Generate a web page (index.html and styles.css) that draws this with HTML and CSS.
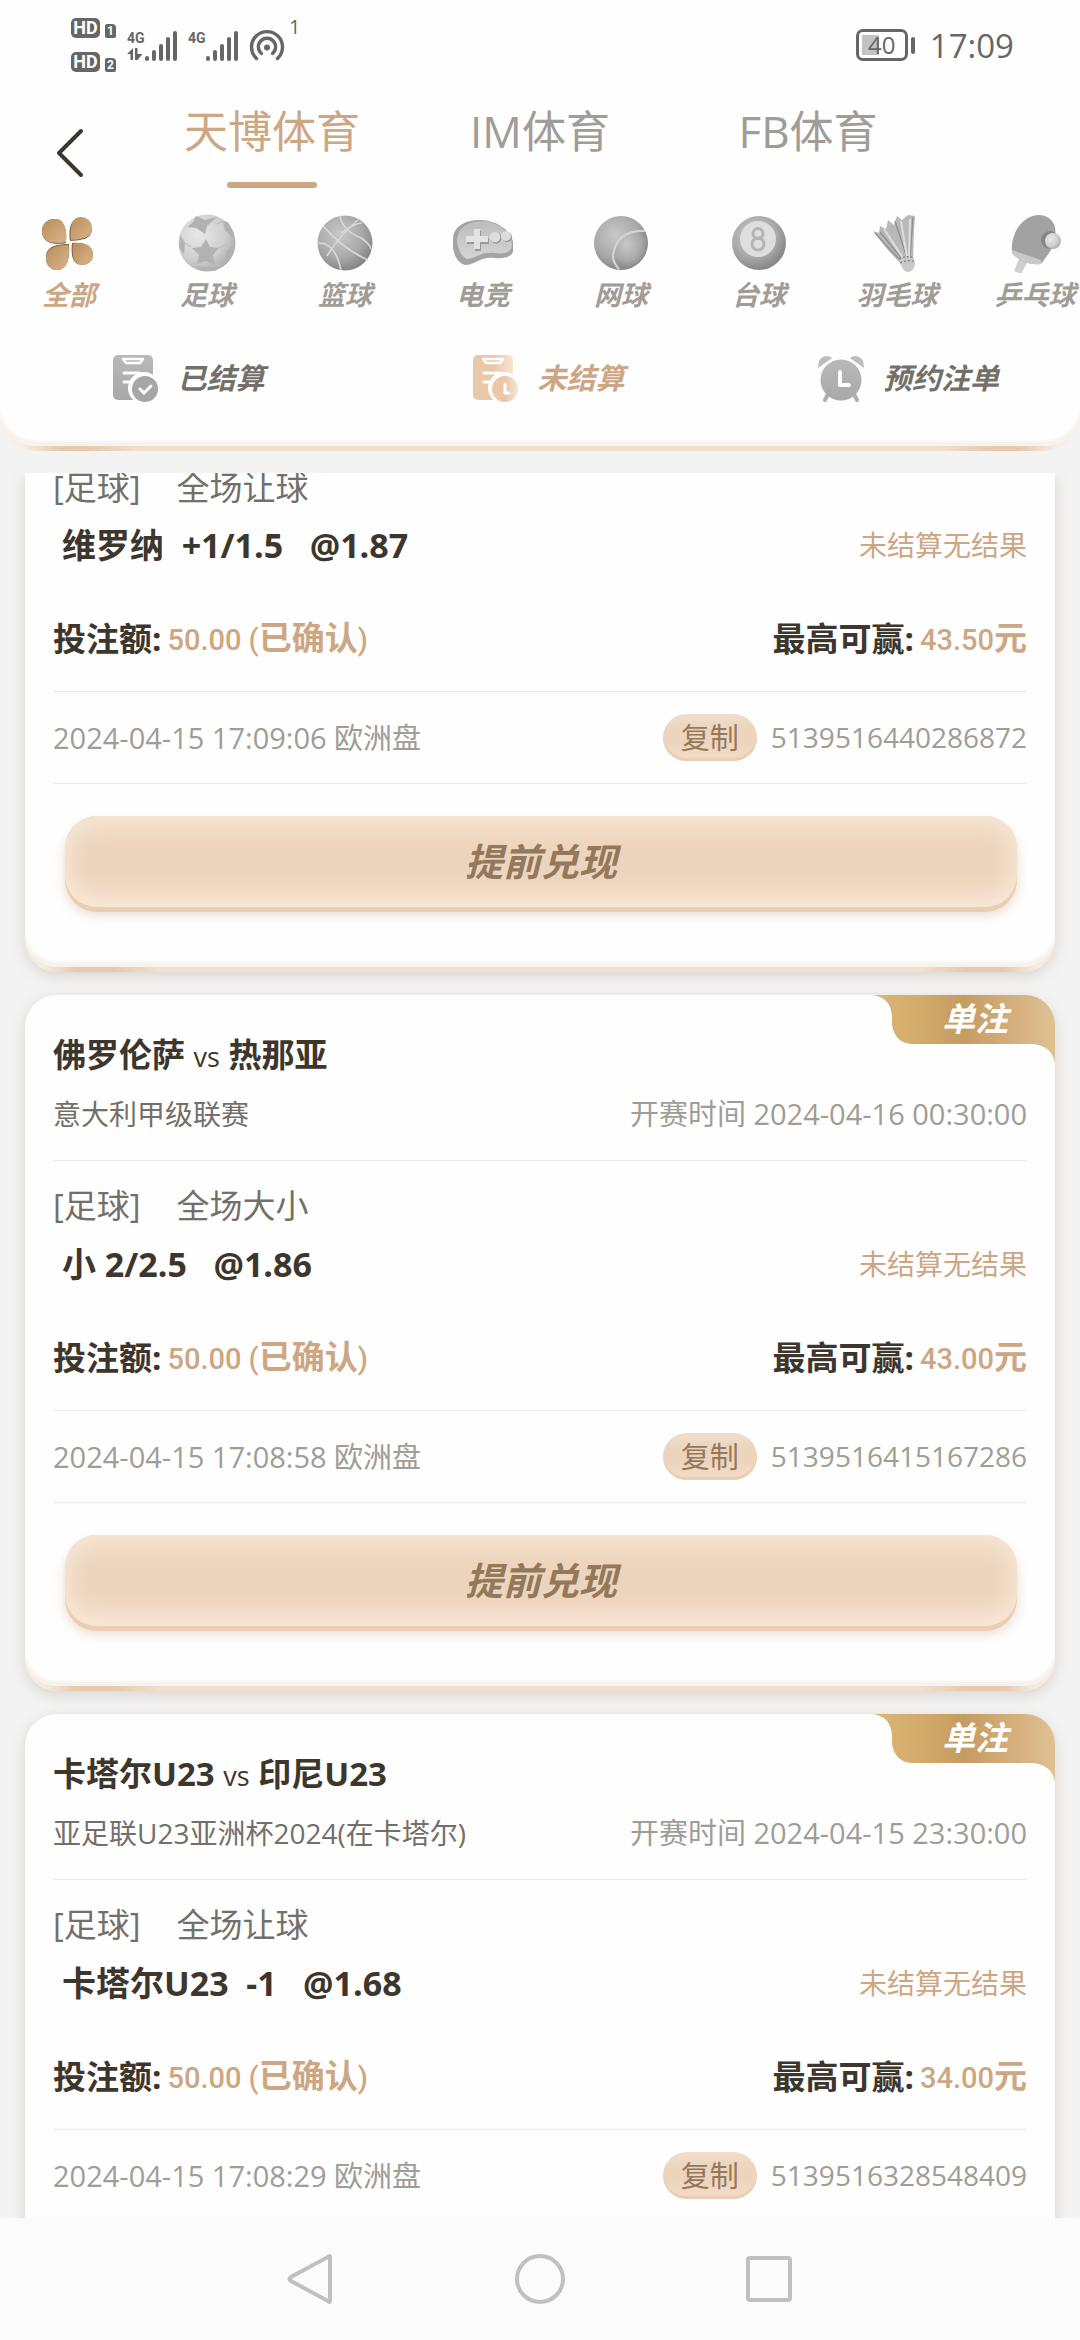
FILE: index.html
```html
<!DOCTYPE html>
<html lang="zh-CN">
  <head>
    <meta charset="UTF-8" />
    <meta name="viewport" content="width=device-width, initial-scale=1.0" />
    <title>投注记录</title>
    <link rel="stylesheet" href="styles.css">
  </head>
  <body>
    <!-- shared gradients -->
    <svg class="defs" aria-hidden="true">
      <defs>
        <linearGradient id="gold" x1="0" y1="0" x2="1" y2="1">
          <stop offset="0" stop-color="#b98d5a" />
          <stop offset="1" stop-color="#d9b58c" />
        </linearGradient>
        <radialGradient id="ball" cx="0.4" cy="0.35" r="0.7">
          <stop offset="0" stop-color="#c8c8c8" />
          <stop offset="0.6" stop-color="#a9a9a9" />
          <stop offset="1" stop-color="#808080" />
        </radialGradient>
        <radialGradient id="soccer" cx="0.35" cy="0.35" r="0.75">
          <stop offset="0" stop-color="#e8e8e8" />
          <stop offset="0.6" stop-color="#cfcfcf" />
          <stop offset="1" stop-color="#a6a6a6" />
        </radialGradient>
        <linearGradient id="pad" x1="0" y1="0" x2="0" y2="1">
          <stop offset="0" stop-color="#bcbcbc" />
          <stop offset="1" stop-color="#d4d4d4" />
        </linearGradient>
        <linearGradient id="doc" x1="0" y1="0" x2="0" y2="1">
          <stop offset="0" stop-color="#b9b9b9" />
          <stop offset="1" stop-color="#a8a8a8" />
        </linearGradient>
        <linearGradient id="docGold" x1="0" y1="0" x2="1" y2="0">
          <stop offset="0" stop-color="#ecc9a8" />
          <stop offset="0.5" stop-color="#e8c7a6" />
          <stop offset="1" stop-color="#f7e6d5" />
        </linearGradient>
        <linearGradient id="ribbon" x1="0" y1="0" x2="1" y2="0">
          <stop offset="0" stop-color="#ddb775" />
          <stop offset="0.25" stop-color="#d3ac6b" />
          <stop offset="0.5" stop-color="#c59c60" />
          <stop offset="0.8" stop-color="#d6b17f" />
          <stop offset="1" stop-color="#dfc292" />
        </linearGradient>
      </defs>
    </svg>

    <header class="header">
      <div class="header-inner">
        <div class="status">
          <div class="hd-list">
            <div class="hd"><span class="hd-tag">HD</span><span class="sim">1</span></div>
            <div class="hd"><span class="hd-tag">HD</span><span class="sim">2</span></div>
          </div>
          <svg class="signal" viewBox="0 0 52 32">
            <text x="0" y="14" class="net">4G</text>
            <path d="M0 25l6-6v12h-2.500v-6zM8 19h2.500v6h5l-5 6h-2.500z" fill="#666" />
            <path d="M20 29v1M27 23v7M34 17v13M41 10v20M48 4v26" stroke="#666" stroke-width="4" stroke-linecap="round" />
          </svg>
          <svg class="signal" viewBox="0 0 52 32">
            <text x="0" y="14" class="net">4G</text>
            <path d="M20 29v1M27 23v7M34 17v13M41 10v20M48 4v26" stroke="#666" stroke-width="4" stroke-linecap="round" />
          </svg>
          <svg class="hotspot" viewBox="0 0 36 32">
            <g fill="none" stroke="#666" stroke-width="3.4" stroke-linecap="round">
              <path d="M7.500 29.500A15.500 15.500 0 1 1 28.500 29.500" />
              <path d="M12.500 24.500A8.600 8.600 0 1 1 23.500 24.500" />
            </g>
            <circle cx="18" cy="18.500" r="3" fill="#666" />
          </svg>
          <span class="hotspot-count">1</span>
          <div class="battery"><span>40</span></div>
          <span class="clock">17:09</span>
        </div>

        <div class="top-row">
          <button class="back" aria-label="返回">
            <svg viewBox="0 0 28 50"><path d="M25 3L3 25l22 22" fill="none" stroke="#3d362d" stroke-width="4" stroke-linecap="round" stroke-linejoin="round" /></svg>
          </button>
          <nav class="tabs">
            <button class="tab active">天博体育</button>
            <button class="tab">IM体育</button>
            <button class="tab">FB体育</button>
          </nav>
        </div>

        <nav class="sports">
          <button class="sport active">
            <svg viewBox="0 0 60 60">
              <g fill="#80603a">
                <path d="M27 30C28 20 27 6 15.500 6A12 12 0 0 0 3 18C3 32 18 32 27 30z" />
                <path d="M31 28C30 18 30 5 42 5A11 11 0 0 1 53 15C53 27 42 27 31 28z" />
                <path d="M30 31C31 44 29 57 18 57A11 11 0 0 1 7 46C6 33 18 31 30 31z" />
                <path d="M33 30C42 29 54 31 54 42A10 10 0 0 1 44 52C32 52 32 40 33 30z" />
              </g>
              <g fill="url(#gold)">
                <path d="M27 29C28 20 27 6 15.500 6A12 12 0 0 0 3 18C3 31 18 31 27 29z" />
                <path d="M32 27C31 18 31 4 42 4A11 11 0 0 1 53 14C53 26 42 26 32 27z" />
                <path d="M29.500 32C31 44 29 57 18 57A11 11 0 0 1 7 46C7 34 18 32 29.500 32z" />
                <path d="M34 30.500C42 29 54 31 54 42A10 10 0 0 1 44 52C33 52 33 40 34 30.500z" />
              </g>
            </svg>
            <span>全部</span>
          </button>
          <button class="sport">
            <svg viewBox="0 0 60 60">
              <circle cx="30" cy="30" r="28.500" fill="url(#soccer)" />
              <g fill="#b2b2b2">
                <path d="M29 26l4 8 9 1-6 7 2 10-9-4-9 3 2-9-7-7 9-1z" />
                <path d="M19 3l9 4 12-3-10 9-2 8-9-6-9-1 6-5z" />
                <path d="M46 8l2 9 9 9v-6l-6-11z" />
                <path d="M3 22l5 8-1 12-5-8z" />
                <path d="M58 32l-8 5-3 14 7-6z" />
                <path d="M18 53l8 5h12l4-3-12-1z" />
              </g>
              <path d="M42 35l12-5M38 52l7 1M14 34l-6-4M16 51l5-2M40 11l6-3" stroke="#c0c0c0" stroke-width="1.500" />
            </svg>
            <span>足球</span>
          </button>
          <button class="sport">
            <svg viewBox="0 0 60 60">
              <circle cx="30" cy="30" r="27.500" fill="url(#ball)" />
              <path d="M43 7Q25 22 12 43M8 13Q28 36 53 47M25 3Q27 17 46 25Q55 31 56 36M3 30Q20 29 26 57M26 20Q40 10 47 10" fill="none" stroke="#d9d9d9" stroke-width="1.600" />
            </svg>
            <span>篮球</span>
          </button>
          <button class="sport">
            <svg viewBox="0 0 60 60">
              <path d="M0 25C1 12 15 6 29 7C46 8 60 19 61 34C61 44 52 46 42 45C28 43 24 51 13 52C3 51 -2 36 0 25z" fill="#a4a4a4" />
              <path d="M5 22C8 12 19 8 31 8C46 9 58 20 59 32C58 41 50 41 42 40C28 38 24 45 14 46C8 44 2 32 5 22z" fill="url(#pad)" />
              <path d="M22 18h6v7h8v6h-8v7h-6v-7h-8v-6h8z" fill="#999" />
              <path d="M21 16h6v7h8v6h-8v7h-6v-7h-8v-6h8z" fill="#e3e3e3" />
              <circle cx="43" cy="25" r="5.500" fill="#999" /><circle cx="42" cy="24" r="5.300" fill="#ddd" />
              <circle cx="54" cy="24" r="5" fill="#999" /><circle cx="53" cy="23" r="5" fill="#ddd" />
            </svg>
            <span>电竞</span>
          </button>
          <button class="sport">
            <svg viewBox="0 0 60 60">
              <circle cx="30" cy="30" r="27" fill="url(#ball)" />
              <path d="M54 18Q26 17 22 42Q22 50 27 56Q50 56 56 35Q57 26 54 18z" fill="url(#ball)" />
              <path d="M54 18Q26 17 22 42Q22 50 28 56" fill="none" stroke="#d4d4d4" stroke-width="2.200" />
            </svg>
            <span>网球</span>
          </button>
          <button class="sport">
            <svg viewBox="0 0 60 60">
              <circle cx="30" cy="30" r="27" fill="url(#ball)" />
              <circle cx="29" cy="26" r="18" fill="#dedede" />
              <g fill="none" stroke="#b4b4b4" stroke-width="3">
                <circle cx="29" cy="20.500" r="5" /><circle cx="29" cy="31" r="6" />
              </g>
            </svg>
            <span>台球</span>
          </button>
          <button class="sport">
            <svg viewBox="0 0 60 60">
              <path d="M6 18l6 2 1-7 6 3 2-9 6 5 3-9 5 4 6-5 7 1-1 15-1 30-14 1L20 36z" fill="#b8b8b8" />
              <path d="M13 19l22 27M28 8l12 37M46 4l-3 41M8 20l24 26" stroke="#8e8e8e" stroke-width="1.200" />
              <path d="M17 16l19 29M34 8l6 36M43 6l-1 38" stroke="#ddd" stroke-width="2" />
              <path d="M32 46q8-4 15-1l1 6q-1 8-8 8q-5-1-8-13z" fill="#c9c9c9" />
              <path d="M32 46q8-4 15-1M33 50q8-4 15-1" fill="none" stroke="#888" stroke-width="1.600" stroke-dasharray="2 2" />
            </svg>
            <span>羽毛球</span>
          </button>
          <button class="sport">
            <svg viewBox="0 0 60 60">
              <path d="M14 46l8 4-6 11-7-3z" fill="#cfcfcf" />
              <path d="M7 40C5 20 18 2 34 2C48 3 52 13 50 24C49 35 42 43 36 51Q18 53 7 40z" fill="#a2a2a2" />
              <path d="M7 37l29 10v4Q18 53 7 40z" fill="#c9c9c9" />
              <circle cx="45" cy="27" r="9" fill="#858585" />
              <circle cx="48" cy="28" r="8" fill="url(#soccer)" />
            </svg>
            <span>乒乓球</span>
          </button>
        </nav>

        <nav class="filters">
          <button class="filter">
            <svg viewBox="0 0 48 48">
              <rect x="2" y="1" width="40" height="45" rx="5" fill="url(#doc)" />
              <path d="M12 5h20l-3 4H15z" fill="none" stroke="#fefefe" stroke-width="2.500" stroke-linejoin="round" />
              <path d="M13 19h15M13 28h9" stroke="#fefefe" stroke-width="3" stroke-linecap="round" />
              <circle cx="33" cy="34" r="16" fill="#fefefe" />
              <circle cx="34" cy="35" r="13" fill="#a6a6a6" />
              <path d="M29 35l4 4 7-7" fill="none" stroke="#fff" stroke-width="3" stroke-linecap="round" />
            </svg>
            <span>已结算</span>
          </button>
          <button class="filter active">
            <svg viewBox="0 0 48 48">
              <rect x="2" y="1" width="40" height="45" rx="5" fill="url(#docGold)" />
              <path d="M12 5h20l-3 4H15z" fill="none" stroke="#fefefe" stroke-width="2.500" stroke-linejoin="round" />
              <path d="M13 19h15M13 28h9" stroke="#fefefe" stroke-width="3" stroke-linecap="round" />
              <circle cx="33" cy="34" r="16" fill="#fefefe" />
              <circle cx="34" cy="35" r="13" fill="url(#docGold)" />
              <path d="M34 30v9h4" fill="none" stroke="#fff" stroke-width="3" stroke-linecap="round" />
            </svg>
            <span>未结算</span>
          </button>
          <button class="filter">
            <svg viewBox="0 0 48 48">
              <path d="M1 14Q1 3 9 2q4 0 6 2zM47 14Q47 3 39 2q-4 0-6 2z" fill="#bcbcbc" />
              <path d="M11 40l-3 6M37 40l3 6" stroke="#b0b0b0" stroke-width="4" stroke-linecap="round" />
              <circle cx="24" cy="26" r="20.500" fill="url(#doc)" />
              <path d="M23 18v13h9" fill="none" stroke="#fff" stroke-width="4" stroke-linecap="round" stroke-linejoin="round" />
            </svg>
            <span>预约注单</span>
          </button>
        </nav>
      </div>
    </header>

    <main class="list">
      <article class="card card-cut">
        <div class="card-inner">
          <div class="market"><span>[足球]</span><span>全场让球</span></div>
          <div class="row pick"><strong>维罗纳&nbsp; +1/1.5 &nbsp; @1.87</strong><span class="result">未结算无结果</span></div>
          <div class="row amount">
            <div><strong>投注额:</strong> <b class="money">50.00 (<i>已确认</i>)</b></div>
            <div><strong>最高可赢:</strong> <b class="money">43.50<i>元</i></b></div>
          </div>
          <div class="row meta">
            <time>2024-04-15 17:09:06 欧洲盘</time>
            <div class="order"><button class="copy">复制</button><span>5139516440286872</span></div>
          </div>
          <button class="cashout">提前兑现</button>
        </div>
      </article>

      <article class="card">
        <div class="card-inner">
          <div class="badge">
            <svg viewBox="0 0 183 68"><path d="M0 0H153A30 30 0 0 1 183 30V68Q180 51 161 49H40Q23 48 20 30V22Q19 2 0 0z" fill="url(#ribbon)" /></svg>
            <span>单注</span>
          </div>
          <h2 class="teams">佛罗伦萨 <small>vs</small> 热那亚</h2>
          <div class="row league"><span>意大利甲级联赛</span><time>开赛时间 2024-04-16 00:30:00</time></div>
          <div class="market"><span>[足球]</span><span>全场大小</span></div>
          <div class="row pick"><strong>小 2/2.5 &nbsp; @1.86</strong><span class="result">未结算无结果</span></div>
          <div class="row amount">
            <div><strong>投注额:</strong> <b class="money">50.00 (<i>已确认</i>)</b></div>
            <div><strong>最高可赢:</strong> <b class="money">43.00<i>元</i></b></div>
          </div>
          <div class="row meta">
            <time>2024-04-15 17:08:58 欧洲盘</time>
            <div class="order"><button class="copy">复制</button><span>5139516415167286</span></div>
          </div>
          <button class="cashout">提前兑现</button>
        </div>
      </article>

      <article class="card">
        <div class="card-inner">
          <div class="badge">
            <svg viewBox="0 0 183 68"><path d="M0 0H153A30 30 0 0 1 183 30V68Q180 51 161 49H40Q23 48 20 30V22Q19 2 0 0z" fill="url(#ribbon)" /></svg>
            <span>单注</span>
          </div>
          <h2 class="teams">卡塔尔U23 <small>vs</small> 印尼U23</h2>
          <div class="row league"><span>亚足联U23亚洲杯2024(在卡塔尔)</span><time>开赛时间 2024-04-15 23:30:00</time></div>
          <div class="market"><span>[足球]</span><span>全场让球</span></div>
          <div class="row pick"><strong>卡塔尔U23&nbsp; -1 &nbsp; @1.68</strong><span class="result">未结算无结果</span></div>
          <div class="row amount">
            <div><strong>投注额:</strong> <b class="money">50.00 (<i>已确认</i>)</b></div>
            <div><strong>最高可赢:</strong> <b class="money">34.00<i>元</i></b></div>
          </div>
          <div class="row meta">
            <time>2024-04-15 17:08:29 欧洲盘</time>
            <div class="order"><button class="copy">复制</button><span>5139516328548409</span></div>
          </div>
        </div>
      </article>
    </main>

    <footer class="navbar">
      <button aria-label="返回"><svg viewBox="0 0 54 54"><path d="M46 5v44q0 2-2 0L7 29q-3-2 0-4L44 5q2-2 2 0z" /></svg></button>
      <button aria-label="主页"><svg viewBox="0 0 54 54"><circle cx="27" cy="27" r="23" /></svg></button>
      <button aria-label="最近任务"><svg viewBox="0 0 54 54"><rect x="6" y="6" width="42" height="42" rx="2" /></svg></button>
    </footer>
  </body>
</html>
```

FILE: styles.css
```css
* {
  box-sizing: border-box;
}

body {
  margin: 0;
  height: 100vh;
  display: flex;
  flex-direction: column;
  overflow: hidden;
  background: #f3f3f3;
  color: #3d362d;
  font-family: "Open Sans", "Noto Sans CJK SC", sans-serif;
  font-size: 28px;
}

button {
  border: 0;
  padding: 0;
  background: none;
  color: inherit;
  font-family: inherit;
}

svg {
  display: block;
}

.defs {
  position: absolute;
  width: 0;
  height: 0;
}

/* header */
.header {
  padding-bottom: 5px;
  border-radius: 0 0 36px 36px;
  background: linear-gradient(90deg, #f8f0e8 20px, #e7caae 60px, #e7caae 90px, #f2dfce 140px, #f2dfce calc(100% - 140px), #e7caae calc(100% - 90px), #e7caae calc(100% - 60px), #f8f0e8 calc(100% - 20px));
}

.header-inner {
  background: #fefefe;
  border-radius: 0 0 36px 36px;
  box-shadow: inset 0 -6px 3px -1px #f6f2ec;
}

.status {
  display: flex;
  height: 92px;
  padding: 18px 66px 0 71px;
  color: #666;
}

.hd-list {
  width: 56px;
  display: flex;
  flex-direction: column;
  gap: 14px;
}

.hd {
  display: flex;
  align-items: flex-end;
  gap: 5px;
}

.hd-tag,
.sim {
  background: #666;
  color: #fefefe;
  border-radius: 5px;
  width: 29px;
  text-align: center;
  font: bold 18px/20px Roboto, sans-serif;
}

.sim {
  width: 11px;
  border-radius: 2px 4px 2px 2px;
  font-size: 12px;
  line-height: 14px;
}

.signal {
  width: 52px;
  height: 32px;
  margin: 11px 9px 0 0;
}

.net {
  font: bold 14px Roboto, sans-serif;
  fill: #666;
}

.hotspot {
  width: 36px;
  height: 32px;
  margin-top: 11px;
}

.hotspot-count {
  margin-left: 4px;
  font-size: 20px;
  line-height: 18px;
}

.battery {
  position: relative;
  width: 52px;
  height: 32px;
  margin: 11px 22px 0 auto;
  border: 3px solid #666;
  border-radius: 7px;
  background: linear-gradient(#c3c3c3, #c3c3c3) 3px 3px / 17px 20px no-repeat;
  font-size: 24px;
  line-height: 26px;
  text-align: center;
}

.battery::after {
  content: "";
  position: absolute;
  right: -10px;
  top: 5px;
  width: 4px;
  height: 17px;
  border-radius: 2px;
  background: #666;
}

.clock {
  margin-top: 11px;
  font-size: 33px;
  line-height: 34px;
}

.top-row {
  display: flex;
  align-items: flex-end;
  padding: 0 138px 0 0;
}

.back {
  width: 138px;
  height: 70px;
  padding-left: 56px;
}

.back svg {
  width: 28px;
  height: 50px;
}

.tabs {
  flex: 1;
  display: flex;
}

.tab {
  position: relative;
  flex: 1;
  height: 96px;
  padding-bottom: 18px;
  font-size: 44px;
  line-height: 78px;
  color: #a09c96;
}

.tab.active {
  color: #cda684;
}

.tab.active::after {
  content: "";
  position: absolute;
  left: 50%;
  bottom: 0;
  width: 90px;
  height: 6px;
  margin-left: -45px;
  border-radius: 3px;
  background: #cda684;
}

.sports {
  display: flex;
  margin-top: 25px;
  overflow: hidden;
}

.sport {
  flex: 0 0 138px;
  font-size: 27px;
  font-style: italic;
  font-weight: 600;
  line-height: 38px;
  color: #a09c96;
}

.sport svg {
  width: 60px;
  height: 60px;
  margin: 0 auto 3px;
}

.sport.active,
.filter.active {
  color: #cda684;
}

.filters {
  display: flex;
  padding: 40px 0 44px;
}

.filter {
  flex: 1;
  display: flex;
  align-items: center;
  justify-content: center;
  gap: 18px;
  padding-left: 16px;
  font-size: 29px;
  font-style: italic;
  font-weight: 600;
  line-height: 48px;
  color: #736f69;
}

.filter svg {
  width: 48px;
  height: 48px;
}

/* bet list */
.list {
  flex: 1;
  min-height: 0;
  margin-top: 22px;
  padding: 0 25px;
  overflow: hidden;
}

.card {
  margin-bottom: 23px;
  padding-bottom: 5px;
  border-radius: 32px;
  background: linear-gradient(90deg, #f6ebe2 20px, #e7caae 50px, #e7caae 90px, #f2dfce 135px, #f2dfce calc(100% - 135px), #e7caae calc(100% - 90px), #e7caae calc(100% - 50px), #f6ebe2 calc(100% - 20px));
  box-shadow: 0 4px 14px rgba(120, 90, 60, 0.2);
}

.card-inner {
  position: relative;
  padding: 36px 28px 60px;
  border-radius: 32px;
  background: #fefefe;
  box-shadow: inset 0 -6px 3px -1px #f6f2ec;
}

.badge {
  position: absolute;
  top: 0;
  right: 0;
  width: 183px;
}

.badge span {
  position: absolute;
  top: 0;
  left: 70px;
  font-size: 33px;
  font-style: italic;
  font-weight: bold;
  line-height: 48px;
  color: #fff;
}

.row {
  display: flex;
  justify-content: space-between;
  align-items: center;
}

.teams {
  margin: 0 0 11px;
  font-size: 33px;
  line-height: 48px;
}

.teams small {
  font-size: 27px;
  font-weight: normal;
}

.league {
  padding-bottom: 24px;
  border-bottom: 1px solid #e9e9e9;
  line-height: 44px;
  color: #736f69;
}

time {
  font-size: 29px;
  color: #a09c96;
}

.market {
  display: flex;
  gap: 36px;
  padding-top: 21px;
  font-size: 33px;
  line-height: 48px;
  color: #736f69;
}

/* first card continues from above the list */
.card-cut,
.card-cut .card-inner {
  border-top-left-radius: 0;
  border-top-right-radius: 0;
}

.card-cut .card-inner {
  padding-top: 0;
}

.card-cut .market {
  padding: 0 0 8px;
  line-height: 30px;
}

.pick {
  margin-top: 10px;
  padding-left: 9px;
  font-size: 34px;
  line-height: 48px;
}

.result {
  font-size: 28px;
  color: #cda684;
}

.amount {
  margin-top: 46px;
  padding-bottom: 27px;
  border-bottom: 1px solid #e9e9e9;
  font-size: 33px;
  line-height: 48px;
}

.amount div {
  display: flex;
  gap: 6px;
}

.money {
  color: #cda684;
  font-family: Roboto, "Noto Sans CJK SC", sans-serif;
  font-size: 29px;
  font-weight: 500;
}

.money i {
  font-size: 33px;
  font-style: normal;
  font-weight: bold;
}

.meta {
  padding: 22px 0;
  border-bottom: 1px solid #e9e9e9;
  line-height: 47px;
  color: #a09c96;
}

.order {
  display: flex;
  gap: 14px;
}

.copy {
  width: 94px;
  height: 47px;
  border-radius: 24px;
  background: linear-gradient(#f1dfcc, #edd5bd 30%, #edd5bd 60%, #f3dcc6);
  box-shadow: inset 0 -3px 1px #ebcdb3;
  font-size: 29px;
  line-height: 47px;
  color: #93785b;
}

.cashout {
  display: block;
  width: calc(100% - 22px);
  height: 91px;
  margin: 32px 11px 0 12px;
  border-radius: 32px;
  background: #edd5bd;
  box-shadow: inset 0 12px 20px #f4e5d3, inset 0 -12px 20px #fae8d6, 0 5px 0 #ebcdb3, 0 8px 12px rgba(205, 166, 132, 0.4);
  font-size: 38px;
  font-style: italic;
  font-weight: 600;
  line-height: 91px;
  color: #93785b;
}

/* system navigation */
.navbar {
  display: flex;
  justify-content: center;
  gap: 175px;
  height: 122px;
  background: #fbfbfb;
}

.navbar svg {
  width: 54px;
  height: 54px;
  fill: none;
  stroke: #c0c0c0;
  stroke-width: 4px;
}
```
